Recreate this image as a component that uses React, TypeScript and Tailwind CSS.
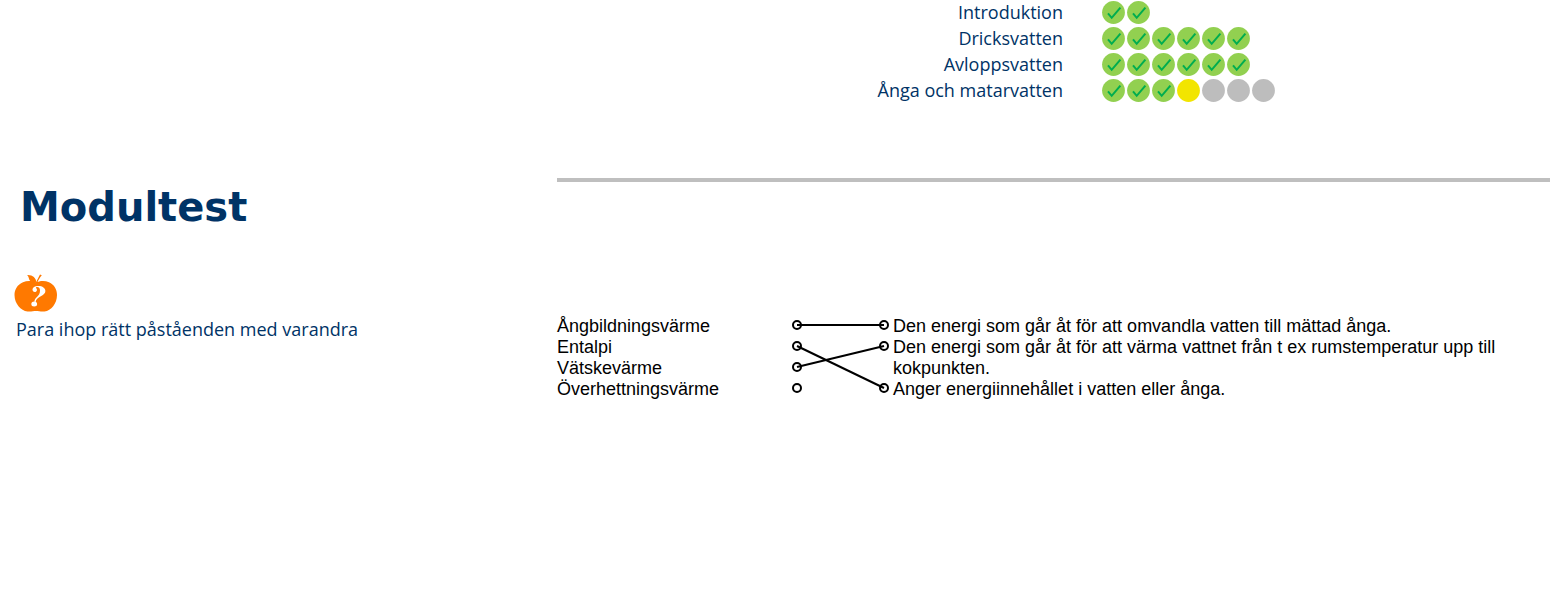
import React from "react";

type Status = "done" | "current" | "todo";

const modules: { name: string; steps: Status[] }[] = [
  { name: "Introduktion", steps: ["done", "done"] },
  { name: "Dricksvatten", steps: ["done", "done", "done", "done", "done", "done"] },
  { name: "Avloppsvatten", steps: ["done", "done", "done", "done", "done", "done"] },
  { name: "Ånga och matarvatten", steps: ["done", "done", "done", "current", "todo", "todo", "todo"] },
];

const terms = ["Ångbildningsvärme", "Entalpi", "Vätskevärme", "Överhettningsvärme"];

const statements = [
  "Den energi som går åt för att omvandla vatten till mättad ånga.",
  "Den energi som går åt för att värma vattnet från t ex rumstemperatur upp till kokpunkten.",
  "Anger energiinnehållet i vatten eller ånga.",
];

const fills: Record<Status, string> = { done: "#92d050", current: "#f2e500", todo: "#bdbdbd" };

function Step({ status }: { status: Status }) {
  return (
    <svg viewBox="0 0 23 23" className="size-[23px]" aria-hidden="true">
      <circle cx="11.5" cy="11.5" r="11.4" fill={fills[status]} />
      {status === "done" && (
        <path d="M6 12.4 L9.7 16.8 L18.4 6.6" fill="none" stroke="#00ad4f" strokeWidth="2" />
      )}
    </svg>
  );
}

function AppleIcon() {
  return (
    <svg viewBox="0 0 44 38" className="h-[38px] w-11" aria-hidden="true">
      <path
        d="M22 8.6C19 7 13.5 6.4 9 8.2C3.5 10.5 .5 15.4 .5 21C.6 29.8 6.8 36.6 13.5 37.5C17 37.9 19.5 36.9 22 36.9C24.5 36.9 27 37.9 30.5 37.5C37.2 36.6 42.9 29.8 43 21C43.1 15.4 40.2 10.5 35 8.2C30.5 6.4 25 7 22 8.6Z"
        fill="#ff7900"
      />
      <path d="M13.2 1C18.5 .7 22 3.6 22.6 9C17.6 8.8 15.8 7.5 15 4.8C14.7 3.4 14.2 2.2 13.2 1Z" fill="#ff7900" />
      <path d="M21.8 9C23 6 24.7 3 26 .4L27.8 1.3C25.8 3.7 24.3 6 23.2 9Z" fill="#ff7900" />
      <path
        d="M20.5 28C19.8 23.3 26 22.8 26 16.7C26 14.4 25 13.1 23.2 13.1C22.1 13.1 21.6 13.6 22.4 14.5C23.7 16.1 22.6 18 20.8 18C19.4 18 18.5 17 18.5 15.6C18.5 13.3 21 11.9 24.3 11.9C28.5 11.9 31.4 13.9 31.4 17.1C31.4 22.3 22.5 22.3 21.6 28Z"
        fill="#fff"
      />
      <ellipse cx="20.2" cy="30" rx="2.9" ry="2.5" fill="#fff" />
    </svg>
  );
}

function Dot({ label }: { label: string }) {
  return (
    <button
      type="button"
      aria-label={label}
      className="block size-[10px] shrink-0 rounded-full border-2 border-black"
    />
  );
}

export default function App() {
  return (
    <main className="bg-white pb-10 text-[#003366]">
      <header className="flex flex-col">
        {modules.map((m) => (
          <div key={m.name} className="grid h-[26px] grid-cols-[1063fr_487fr] items-start">
            <div className="text-right font-['Open_Sans',sans-serif] text-lg/[24px]">{m.name}</div>
            <div className="flex gap-[2px] pt-px pl-[39px]">
              {m.steps.map((s, i) => (
                <Step key={i} status={s} />
              ))}
            </div>
          </div>
        ))}
      </header>

      <div className="mt-[74px] grid grid-cols-[557fr_993fr]">
        <section className="pl-[14px]">
          <h1 className="pt-[5px] pl-[6px] font-['DejaVu_Sans',sans-serif] text-[40px]/[48px] font-bold">Modultest</h1>
          <div className="mt-[43px]">
            <AppleIcon />
          </div>
          <p className="mt-1 pl-[2px] font-['Open_Sans',sans-serif] text-lg/[26px]">
            Para ihop rätt påståenden med varandra
          </p>
        </section>

        <section className="font-['Liberation_Sans',Arial,sans-serif] text-lg/[21px] text-black">
          <hr className="border-t-4 border-[#bfbfbf]" />
          <div className="mt-[134px] flex pr-10">
            <ul className="w-[235px] shrink-0">
              {terms.map((t) => (
                <li key={t}>{t}</li>
              ))}
            </ul>
            <div className="relative flex w-[97px] shrink-0 justify-between pr-[5px]">
              <div className="flex flex-col">
                {terms.map((t) => (
                  <div key={t} className="flex h-[21px] items-start pt-1">
                    <Dot label={t} />
                  </div>
                ))}
              </div>
              <svg viewBox="0 0 97 84" className="pointer-events-none absolute top-0 left-0 h-[84px] w-[97px]" aria-hidden="true">
                <g stroke="#000" strokeWidth="2">
                  <path d="M5 9 H92" />
                  <path d="M5 30 L92 72" />
                  <path d="M5 51 L92 30" />
                </g>
              </svg>
            </div>
            <ul className="min-w-0 flex-1">
              {statements.map((s) => (
                <li key={s} className="-ml-[10px] flex gap-[4px]">
                  <span className="pt-1">
                    <Dot label={s} />
                  </span>
                  <span>{s}</span>
                </li>
              ))}
            </ul>
          </div>
        </section>
      </div>
    </main>
  );
}
